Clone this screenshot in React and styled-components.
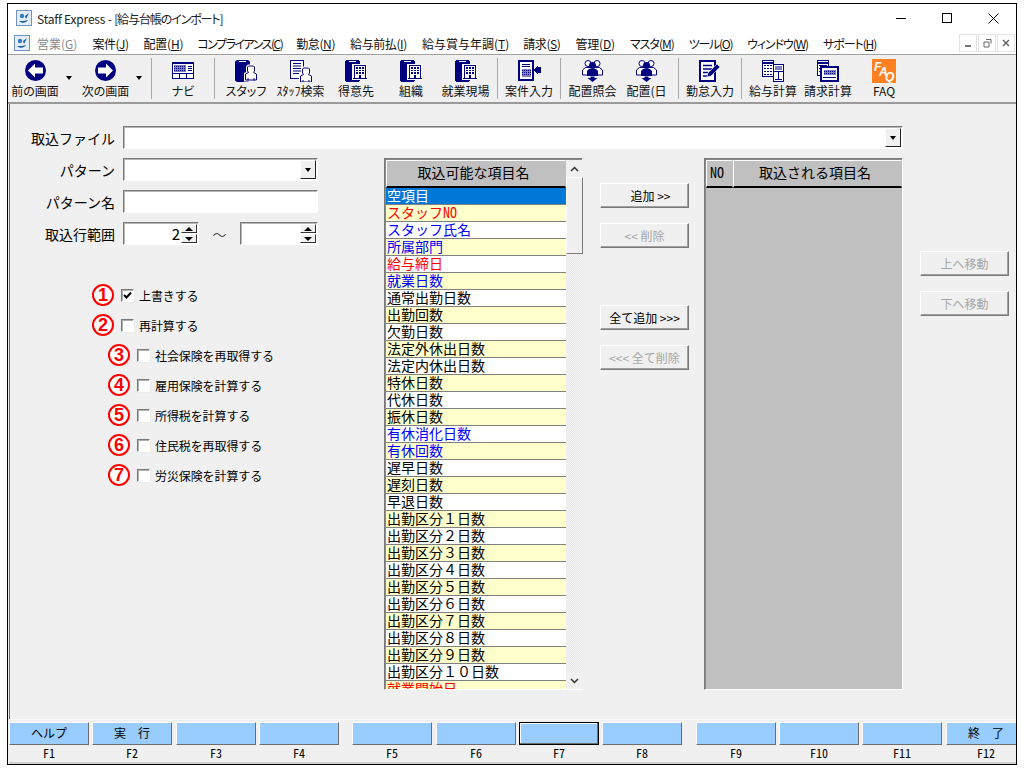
import React from 'react';
import styled, { createGlobalStyle } from 'styled-components';

const Global = createGlobalStyle`
  html, body { margin: 0; padding: 0; background: #fff; }
  body { width: 1024px; height: 768px; overflow: hidden; }
  * { box-sizing: border-box; }
`;

const gothic = `"Noto Sans CJK JP", "Liberation Sans", sans-serif`;
const navy = '#000080';
const dither = '#7f7fbf';

const Page = styled.div`
  width: 1024px;
  height: 768px;
  padding: 3px 7px 3px 7px;
  font-family: ${gothic};
  color: #000;
`;

const Window = styled.div`
  height: 762px;
  border: 1px solid #000;
  display: flex;
  flex-direction: column;
  background: #f0f0f0;
  overflow: hidden;
`;

const TitleBar = styled.div`
  height: 28px;
  background: #fff;
  display: flex;
  align-items: center;
  padding-left: 8px;
`;

const TitleText = styled.div`
  margin-left: 5px;
  font-size: 12px;
  letter-spacing: -0.2px;
  font-feature-settings: "palt";
  color: #222;
  flex: 1;
`;

const TitleDoc = styled.span`
  letter-spacing: -1.1px;
`;

const WinButton = styled.div`
  width: 46px;
  height: 28px;
  display: flex;
  align-items: center;
  justify-content: center;
`;

const MenuBar = styled.div`
  height: 23px;
  background: #fff;
  display: flex;
  align-items: center;
  padding-left: 6px;
  border-bottom: 1px solid #a0a0a0;
`;

const MenuItem = styled.span`
  font-size: 12px;
  font-feature-settings: "palt";
  color: ${p => (p.$off ? '#8a8a8a' : '#111')};
  margin-left: ${p => p.$gap}px;
  letter-spacing: ${p => p.$ls || 0}px;
  white-space: nowrap;
  u { text-underline-offset: 1px; }
`;

const MdiButtons = styled.div`
  margin-left: auto;
  display: flex;
  gap: 1px;
  padding-right: 1px;
`;

const MdiButton = styled.div`
  width: 18px;
  height: 18px;
  border: 1px solid #e3e3e3;
  display: flex;
  align-items: center;
  justify-content: center;
`;

const ToolBar = styled.div`
  height: 49px;
  display: flex;
  padding-left: 2px;
  border-bottom: 2px solid #9a9a9a;
  background: #f0f0f0;
`;

const Tool = styled.div`
  width: ${p => p.$w}px;
  margin-right: ${p => p.$mr || 0}px;
  flex: none;
  position: relative;
  display: flex;
  flex-direction: column;
  align-items: center;
  padding-top: 3px;
`;

const ToolIcon = styled.div`
  height: 25px;
  display: flex;
  align-items: center;
  justify-content: center;
`;

const ToolLabel = styled.div`
  font-size: 12px;
  line-height: 14px;
  margin-top: 1px;
  font-feature-settings: ${p => (p.$narrow ? '"palt"' : 'normal')};
  white-space: nowrap;
  color: #111;
`;

const Caret = styled.span`
  position: absolute;
  left: ${p => p.$l}px;
  top: 21px;
  border-left: 3.5px solid transparent;
  border-right: 3.5px solid transparent;
  border-top: 4px solid #000;
`;

const ToolSep = styled.div`
  width: 1px;
  height: 41px;
  margin-top: 3px;
  background: #a8a8a8;
  flex: none;
`;

const Content = styled.div`
  flex: 1;
  min-height: 0;
  margin-left: 1px;
  border-left: 1px solid #6e6e6e;
  padding: 22px 0 0 0;
  display: flex;
  flex-direction: column;
`;

const FileRow = styled.div`
  display: flex;
  align-items: center;
  height: 23px;
  padding-left: 21px;
`;

const FieldLabel = styled.div`
  width: 92px;
  text-align: right;
  font-size: 14px;
  padding-right: 8px;
  white-space: nowrap;
  flex: none;
`;

const Sunken = styled.div`
  width: ${p => p.$w}px;
  height: 23px;
  background: #fff;
  border: 1px solid;
  border-color: #7a7a7a #fff #fff #7a7a7a;
  box-shadow: inset 1px 1px 0 #b8b8b8;
  display: flex;
  align-items: center;
  justify-content: flex-end;
  flex: none;
  font-size: 14px;
`;

const DropButton = styled.div`
  width: 16px;
  height: 19px;
  margin-right: 1px;
  background: #f0f0f0;
  border: 1px solid;
  border-color: #fff #222 #222 #fff;
  display: flex;
  align-items: center;
  justify-content: center;
  &::after {
    content: '';
    border-left: 3px solid transparent;
    border-right: 3px solid transparent;
    border-top: 4px solid #000;
  }
`;

const SpinValue = styled.span`
  padding-right: 1px;
  font-size: 15px;
`;

const Spin = styled.div`
  width: 16px;
  height: 19px;
  margin-right: 1px;
  display: flex;
  flex-direction: column;
  gap: 1px;
`;

const SpinPart = styled.div`
  flex: 1;
  background: #f0f0f0;
  border: 1px solid;
  border-color: #fff #333 #333 #fff;
  display: flex;
  align-items: center;
  justify-content: center;
  &::after {
    content: '';
    border-left: 4px solid transparent;
    border-right: 4px solid transparent;
    ${p => (p.$up ? 'border-bottom: 4px solid #000;' : 'border-top: 4px solid #000;')}
  }
`;

const Columns = styled.div`
  margin-top: 9px;
  display: flex;
  padding-left: 21px;
`;

const LeftPane = styled.div`
  width: 353px;
  flex: none;
`;

const FieldRow = styled.div`
  display: flex;
  align-items: center;
  height: 23px;
  margin-bottom: ${p => p.$mb ?? 9}px;
`;

const Tilde = styled.span`
  width: 41px;
  text-align: center;
  font-size: 14px;
  font-weight: 300;
  flex: none;
`;

const Checks = styled.div`
  margin-top: 38px;
  display: flex;
  flex-direction: column;
  gap: 6px;
`;

const CheckRow = styled.div`
  height: 24px;
  display: flex;
  align-items: center;
  padding-left: ${p => (p.$sub ? 77 : 61)}px;
  font-size: 12px;
  letter-spacing: -0.1px;
`;

const Badge = styled.div`
  width: 22px;
  height: 22px;
  border-radius: 50%;
  border: 2px solid #ff0000;
  background: #fff;
  color: #ff0000;
  font: bold 18px/18px "Liberation Sans", sans-serif;
  letter-spacing: 0;
  text-align: center;
  flex: none;
`;

const Box = styled.div`
  width: 13px;
  height: 13px;
  margin-left: 7px;
  margin-right: 5px;
  background: #fff;
  border: 1px solid;
  border-color: #7a7a7a #fff #fff #7a7a7a;
  box-shadow: inset 1px 1px 0 #b0b0b0, 0 0 0 0.5px #e8e8e8;
  display: flex;
  align-items: center;
  justify-content: center;
  flex: none;
`;

const ListPanel = styled.div`
  width: 199px;
  height: 532px;
  flex: none;
  border: 1px solid;
  border-color: #7a7a7a #fff #fff #7a7a7a;
  box-shadow: inset 1px 1px 0 #8a8a8a;
  padding: 1px 0 0 1px;
  display: flex;
`;

const ListBody = styled.div`
  width: 180px;
  overflow: hidden;
  flex: none;
`;

const HeaderCell = styled.div`
  height: 28px;
  background: #c0c0c0;
  border: 1px solid;
  border-color: #fff #c0c0c0 #000 #fff;
  display: flex;
  align-items: center;
  justify-content: center;
  padding: 0 5px 3px 0;
  font-size: 14px;
  font-feature-settings: ${p => (p.$half ? '"hwid"' : 'normal')};
  width: ${p => (p.$w ? `${p.$w}px` : 'auto')};
  flex: ${p => (p.$w ? 'none' : 1)};
  border-bottom-width: 2px;
`;

const Row = styled.div`
  height: 17px;
  line-height: 15px;
  font-size: 14px;
  padding-left: 1px;
  white-space: nowrap;
  overflow: hidden;
  border-bottom: 1px solid #808080;
  font-feature-settings: ${p => (p.$half ? '"hwid"' : 'normal')};
  background: ${p => p.$bg};
  color: ${p => p.$fg};
`;

const Scroll = styled.div`
  width: 17px;
  flex: none;
  display: flex;
  flex-direction: column;
  background: #f0f0f0 repeating-conic-gradient(#e6e6e6 0 25%, #f7f7f7 0 50%) 0 0 / 2px 2px;
`;

const ScrollEnd = styled.div`
  height: 17px;
  background: #f0f0f0;
  display: flex;
  align-items: center;
  justify-content: center;
  flex: none;
`;

const ScrollThumb = styled.div`
  height: 77px;
  background: #f0f0f0;
  border: 1px solid;
  border-color: #fff #7a7a7a #7a7a7a #fff;
  flex: none;
`;

const ScrollTrack = styled.div`
  flex: 1;
`;

const MidPane = styled.div`
  width: 121px;
  flex: none;
  padding: 25px 0 0 17px;
`;

const Bevel = styled.div`
  width: 89px;
  height: 25px;
  background: #f0f0f0;
  border: 1px solid;
  border-color: #fff #7a7a7a #7a7a7a #fff;
  box-shadow: inset -1px -1px 0 #a0a0a0;
  font-size: 12px;
  display: flex;
  align-items: center;
  justify-content: center;
  white-space: pre;
  color: ${p => (p.$off ? '#a6a6a6' : '#000')};
  margin-top: ${p => p.$mt || 0}px;
`;

const RightPanel = styled.div`
  width: 199px;
  height: 532px;
  flex: none;
  background: #c0c0c0;
  border: 1px solid;
  border-color: #7a7a7a #fff #fff #7a7a7a;
  box-shadow: inset 1px 1px 0 #8a8a8a;
  padding: 1px 0 0 1px;
`;

const RightHead = styled.div`
  display: flex;
  height: 28px;
`;

const MovePane = styled.div`
  width: 105px;
  flex: none;
  padding: 93px 0 0 17px;
`;

const FnBar = styled.div`
  height: 45px;
  flex: none;
  margin-left: 1px;
  padding: 2px 0 0 0;
  display: flex;
  border-top: 1px solid #fafafa;
  border-bottom: 2px solid #d0d0d0;
  background: #f0f0f0;
`;

const FnCol = styled.div`
  width: 80px;
  margin-left: ${p => p.$ml ?? 3}px;
  flex: none;
  display: flex;
  flex-direction: column;
  align-items: center;
`;

const FnKey = styled.div`
  width: 80px;
  height: 23px;
  background: #99ccff;
  border: 1px solid;
  border-color: ${p => (p.$focus ? '#000' : '#fff #6e6e6e #6e6e6e #fff')};
  box-shadow: ${p => (p.$focus ? 'inset -1px -1px 0 #6e6e6e, inset 1px 1px 0 #fff' : 'none')};
  font-size: 12px;
  line-height: 20px;
  text-align: center;
  white-space: pre;
`;

const FnName = styled.div`
  font-size: 12px;
  line-height: 14px;
  font-feature-settings: "hwid";
  margin-top: 1px;
`;

const AppIcon = () => (
  <svg width="16" height="16" viewBox="0 0 16 16">
    <rect x=".5" y=".5" width="15" height="15" fill="#e4eef8" stroke="#6f93bd" />
    <path d="M3 11c3 3 7 2 9-1-2 1-6 1-9 1z" fill="#1c5fa8" />
    <circle cx="6" cy="6" r="2.2" fill="#2f7fc8" />
    <path d="M10 9l3-6-4 3z" fill="#1c5fa8" />
  </svg>
);

const Back = ({ flip }) => (
  <svg width="21" height="21" viewBox="0 0 21 21" style={flip ? { transform: 'scaleX(-1)' } : undefined}>
    <circle cx="10.5" cy="10.5" r="10.5" fill={navy} />
    <path d="M3 10.500L10 3.500v4h8v6h-8v4z" fill="#fff" />
  </svg>
);

const Navi = () => (
  <svg width="22" height="17" viewBox="0 0 22 17" shapeRendering="crispEdges">
    <rect x=".5" y=".5" width="21" height="16" fill="#fff" stroke={navy} />
    <path d="M0 1.500h22" stroke={navy} />
    <rect x="2" y="3" width="12" height="7" fill={dither} />
    <path d="M2 4.500h12M2 6.500h12M2 8.500h12" stroke={navy} strokeDasharray="1 1" />
    <path d="M16 4.500h4M16 6.500h4M16 8.500h4" stroke={navy} />
    <path d="M0 11.500h22M7.500 11v6M14.500 11v6" stroke={navy} fill="none" />
  </svg>
);

const Cylinder = () => (
  <>
    <path d="M2 0h11l2 1.500V20.500l-2 1.500H2l-2-1.500V1.500z" fill={navy} />
    <path d="M4 1.500h7" stroke="#fff" />
  </>
);

const Person = ({ x = 0, y = 0 }) => (
  <g transform={`translate(${x} ${y})`}>
    <path d="M3.500 1h5l1 1v4l-1 1.500 3 1.500v6H.500v-6l3-1.500-1-1.500V2z" fill="#fff" stroke="#fff" strokeWidth="3" />
    <path d="M3.500 1h5l1 1v4l-1 1.500 3 1.500v6H.500v-6l3-1.500-1-1.500V2z" fill="#fff" stroke={navy} />
    <path d="M3 13v2.500M9 13v2.500" stroke={navy} />
  </g>
);

const CylPerson = () => (
  <svg width="22" height="22" viewBox="0 0 22 22">
    <Cylinder />
    <Person x={10} y={5} />
  </svg>
);

const CylBuilding = () => (
  <svg width="22" height="22" viewBox="0 0 22 22" shapeRendering="crispEdges">
    <Cylinder />
    <rect x="7" y="4" width="15" height="16" fill="#fff" />
    <rect x="9.500" y="5.500" width="11" height="13" fill="#fff" stroke={navy} />
    <path d="M11 8h8M11 10.500h8M11 13h8" stroke={navy} strokeDasharray="2 1" strokeWidth="1.500" />
    <path d="M14 15h2v4h-2z" fill={navy} />
    <path d="M8 18.500h14" stroke={navy} strokeWidth="1.500" />
  </svg>
);

const DocPerson = () => (
  <svg width="22" height="22" viewBox="0 0 22 22">
    <rect x=".5" y=".5" width="13" height="18" fill="#fff" stroke={navy} />
    <path d="M3 3.500h8M3 6h8M3 8.500h8M3 11h8M3 13.500h6" stroke={navy} />
    <Person x={10} y={7} />
  </svg>
);

const DocArrow = () => (
  <svg width="23" height="21" viewBox="0 0 23 21" shapeRendering="crispEdges">
    <rect x="1" y="1" width="14" height="19" fill="#fff" stroke={navy} strokeWidth="2" />
    <path d="M4 4.500h8M4 6.500h8" stroke={navy} />
    <rect x="4" y="9" width="9" height="8" fill={dither} />
    <path d="M4 10.500h9M4 12.500h9M4 14.500h9" stroke={navy} strokeDasharray="1 1" />
    <path d="M15 10l5-5v2h3v6h-3v2z" fill={navy} />
  </svg>
);

const People = () => (
  <svg width="21" height="22" viewBox="0 0 21 22">
    <circle cx="6" cy="3.500" r="3" fill="#fff" stroke={navy} />
    <circle cx="15" cy="3.500" r="3" fill="#fff" stroke={navy} />
    <path d="M.5 15V10l3-2.500h14l3 2.500v5z" fill="#fff" stroke={navy} />
    <circle cx="10.500" cy="5.500" r="3.500" fill={navy} />
    <path d="M5 16V11l2-2h7l2 2v5z" fill={navy} />
    <path d="M8.500 16.500h4v1.500h3L10.500 22l-5-4h3z" fill={navy} />
  </svg>
);

const Edit = () => (
  <svg width="22" height="22" viewBox="0 0 22 22">
    <rect x="1" y="1" width="15" height="20" fill="#fff" stroke={navy} strokeWidth="2" />
    <path d="M4 5.500h9M4 9h9M4 12.500h5M4 16h4" stroke={navy} strokeWidth="1.500" />
    <path d="M8 17l1-4L18 4l3 3-9 9z" fill={navy} stroke="#f0f0f0" strokeWidth=".6" />
  </svg>
);

const Calc = () => (
  <svg width="22" height="22" viewBox="0 0 22 22" shapeRendering="crispEdges">
    <rect x=".5" y=".5" width="11" height="16" fill="#fff" stroke={navy} />
    <path d="M1 2.500h10" stroke={navy} strokeWidth="2" />
    <path d="M2 5.500h8M2 8.500h8M2 11.500h8M2 14.500h8" stroke={navy} strokeDasharray="2 1" strokeWidth="1.500" />
    <rect x="11.500" y="4.500" width="10" height="17" fill="#fff" stroke={navy} />
    <rect x="13" y="6" width="7" height="4" fill={dither} />
    <path d="M11 11.500h11M16.500 12v7M13 19.500h7" stroke={navy} />
  </svg>
);

const Bill = () => (
  <svg width="22" height="22" viewBox="0 0 22 22" shapeRendering="crispEdges">
    <rect x=".5" y=".5" width="11" height="15" fill="#fff" stroke={navy} />
    <path d="M1 2.500h10" stroke={navy} strokeWidth="2" />
    <path d="M2 5.500h8M2 8.500h2M2 11.500h2" stroke={navy} />
    <rect x="4" y="7" width="17" height="14" fill="#fff" stroke={navy} strokeWidth="2" />
    <rect x="6.500" y="10" width="12" height="5" fill={dither} />
    <path d="M7 11.500h11M7 13.500h11" stroke={navy} strokeDasharray="1 1" />
    <path d="M6 17.500h13" stroke={navy} />
  </svg>
);

const FaqText = styled.text`
  fill: #fff;
  font: italic bold 12px "Liberation Sans", sans-serif;
`;

const Faq = () => (
  <svg width="24" height="24" viewBox="0 0 24 24">
    <rect width="24" height="24" fill="#ff8020" />
    <FaqText x="2" y="12">F</FaqText>
    <FaqText x="7" y="17">A</FaqText>
    <FaqText x="13" y="22">Q</FaqText>
  </svg>
);

const tools = [
  { label: '前の画面', w: 50, icon: <Back />, caret: 56, narrow: true },
  { label: '次の画面', w: 91, icon: <Back flip />, caret: 76, narrow: true },
  'sep',
  { label: 'ナビ', w: 62, icon: <Navi />, narrow: true },
  'sep',
  { label: 'スタッフ', w: 62, icon: <CylPerson />, narrow: true },
  { label: 'ｽﾀｯﾌ検索', w: 47, icon: <DocPerson />, narrow: true },
  { label: '得意先', w: 64, icon: <CylBuilding /> },
  { label: '組織', w: 46, icon: <CylBuilding /> },
  { label: '就業現場', w: 63, icon: <CylBuilding /> },
  'sep',
  { label: '案件入力', w: 62, icon: <DocArrow /> },
  'sep',
  { label: '配置照会', w: 63, icon: <People /> },
  { label: '配置(日', w: 45, mr: 9, icon: <People /> },
  'sep',
  { label: '勤怠入力', w: 62, icon: <Edit /> },
  'sep',
  { label: '給与計算', w: 62, icon: <Calc /> },
  { label: '請求計算', w: 48, icon: <Bill /> },
  { label: 'FAQ', w: 64, icon: <Faq /> },
];

const menus = [
  ['営業', 'G', 7, 0, true], ['案件', 'J', 15, -0.5], ['配置', 'H', 15, -0.2], ['コンプライアンス', 'C', 14, -1.5],
  ['勤怠', 'N', 14, -0.4], ['給与前払', 'I', 15, -0.4], ['給与賞与年調', 'T', 15, 0], ['請求', 'S', 14, -0.4],
  ['管理', 'D', 15, -0.2], ['マスタ', 'M', 15, -1], ['ツール', 'O', 15, -1.3], ['ウィンドウ', 'W', 15, -1.1], ['サポート', 'H', 15, -1.1],
];

const R = '#ff0000';
const B = '#0000ff';
const K = '#000';
const items = [
  ['空項目', '#fff'], ['スタッフNO', R], ['スタッフ氏名', B], ['所属部門', B], ['給与締日', R], ['就業日数', B],
  ['通常出勤日数', K], ['出勤回数', K], ['欠勤日数', K], ['法定外休出日数', K], ['法定内休出日数', K],
  ['特休日数', K], ['代休日数', K], ['振休日数', K], ['有休消化日数', B], ['有休回数', B], ['遅早日数', K],
  ['遅刻日数', K], ['早退日数', K], ['出勤区分１日数', K], ['出勤区分２日数', K], ['出勤区分３日数', K],
  ['出勤区分４日数', K], ['出勤区分５日数', K], ['出勤区分６日数', K], ['出勤区分７日数', K],
  ['出勤区分８日数', K], ['出勤区分９日数', K], ['出勤区分１０日数', K], ['就業開始日', R],
];

const checks = [
  ['上書きする', false, true], ['再計算する', false, false], ['社会保険を再取得する', true, false],
  ['雇用保険を計算する', true, false], ['所得税を計算する', true, false], ['住民税を再取得する', true, false],
  ['労災保険を計算する', true, false],
];

const fnKeys = [
  { n: 'F1', t: 'ヘルプ', ml: 0 }, { n: 'F2', t: '実　行' }, { n: 'F3', ml: 4 }, { n: 'F4' },
  { n: 'F5', ml: 13 }, { n: 'F6', ml: 4 }, { n: 'F7', focus: true }, { n: 'F8' },
  { n: 'F9', ml: 14 }, { n: 'F10' }, { n: 'F11' }, { n: 'F12', t: '終　了', ml: 4 },
];

function rowBg(i) {
  if (i === 0) return '#0078d7';
  return i % 2 ? '#ffffcc' : '#fff';
}

export default function App() {
  return (
    <Page>
      <Global />
      <Window>
        <TitleBar>
          <AppIcon />
          <TitleText>Staff Express - <TitleDoc>[給与台帳のインポート]</TitleDoc></TitleText>
          <WinButton>
            <svg width="11" height="11"><path d="M0 5.500h10" stroke="#000" /></svg>
          </WinButton>
          <WinButton>
            <svg width="11" height="11"><rect x=".5" y=".5" width="9" height="9" fill="none" stroke="#000" /></svg>
          </WinButton>
          <WinButton>
            <svg width="11" height="11"><path d="M.5 .5l10 10M10.500 .5l-10 10" stroke="#000" /></svg>
          </WinButton>
        </TitleBar>
        <MenuBar>
          <AppIcon />
          {menus.map(([name, key, gap, ls, off], i) => (
            <MenuItem key={i} $gap={gap} $ls={ls} $off={off}>
              {name}(<u>{key}</u>)
            </MenuItem>
          ))}
          <MdiButtons>
            <MdiButton>
              <svg width="8" height="8"><path d="M1 7h6" stroke="#777" strokeWidth="2" /></svg>
            </MdiButton>
            <MdiButton>
              <svg width="9" height="9"><path d="M3 .5h5v4M1 3h5v5h-5z" stroke="#666" fill="none" /></svg>
            </MdiButton>
            <MdiButton>
              <svg width="8" height="8"><path d="M1 1l6 6M7 1l-6 6" stroke="#666" strokeWidth="1.500" /></svg>
            </MdiButton>
          </MdiButtons>
        </MenuBar>
        <ToolBar>
          {tools.map((t, i) =>
            t === 'sep' ? (
              <ToolSep key={i} />
            ) : (
              <Tool key={i} $w={t.w} $mr={t.mr}>
                <ToolIcon>{t.icon}</ToolIcon>
                <ToolLabel $narrow={t.narrow}>{t.label}</ToolLabel>
                {t.caret !== undefined && <Caret $l={t.caret} />}
              </Tool>
            )
          )}
        </ToolBar>
        <Content>
          <FileRow>
            <FieldLabel>取込ファイル</FieldLabel>
            <Sunken $w={780}><DropButton /></Sunken>
          </FileRow>
          <Columns>
            <LeftPane>
              <FieldRow>
                <FieldLabel>パターン</FieldLabel>
                <Sunken $w={195}><DropButton /></Sunken>
              </FieldRow>
              <FieldRow>
                <FieldLabel>パターン名</FieldLabel>
                <Sunken $w={195} />
              </FieldRow>
              <FieldRow $mb={0}>
                <FieldLabel>取込行範囲</FieldLabel>
                <Sunken $w={76}>
                  <SpinValue>2</SpinValue>
                  <Spin><SpinPart $up /><SpinPart /></Spin>
                </Sunken>
                <Tilde>～</Tilde>
                <Sunken $w={78}>
                  <Spin><SpinPart $up /><SpinPart /></Spin>
                </Sunken>
              </FieldRow>
              <Checks>
                {checks.map(([label, sub, on], i) => (
                  <CheckRow key={i} $sub={sub}>
                    <Badge>{i + 1}</Badge>
                    <Box>
                      {on && (
                        <svg width="9" height="9" viewBox="0 0 9 9">
                          <path d="M1 4l2.500 2.500L8 1.500" stroke="#000" strokeWidth="2" fill="none" />
                        </svg>
                      )}
                    </Box>
                    {label}
                  </CheckRow>
                ))}
              </Checks>
            </LeftPane>
            <ListPanel>
              <ListBody>
                <HeaderCell>取込可能な項目名</HeaderCell>
                {items.map(([name, fg], i) => (
                  <Row key={i} $bg={rowBg(i)} $fg={fg} $half={name.includes('NO')}>{name}</Row>
                ))}
              </ListBody>
              <Scroll>
                <ScrollEnd>
                  <svg width="9" height="6"><path d="M1 5l3.500-3.500L8 5" stroke="#333" strokeWidth="1.500" fill="none" /></svg>
                </ScrollEnd>
                <ScrollThumb />
                <ScrollTrack />
                <ScrollEnd>
                  <svg width="9" height="6"><path d="M1 1l3.500 3.500L8 1" stroke="#333" strokeWidth="1.500" fill="none" /></svg>
                </ScrollEnd>
              </Scroll>
            </ListPanel>
            <MidPane>
              <Bevel>　追加 &gt;&gt;</Bevel>
              <Bevel $off $mt={15}>&lt;&lt; 削除</Bevel>
              <Bevel $mt={57}>全て追加 &gt;&gt;&gt;</Bevel>
              <Bevel $off $mt={15}>&lt;&lt;&lt; 全て削除</Bevel>
            </MidPane>
            <RightPanel>
              <RightHead>
                <HeaderCell $w={27} $half>NO</HeaderCell>
                <HeaderCell>取込される項目名</HeaderCell>
              </RightHead>
            </RightPanel>
            <MovePane>
              <Bevel $off>上へ移動</Bevel>
              <Bevel $off $mt={15}>下へ移動</Bevel>
            </MovePane>
          </Columns>
        </Content>
        <FnBar>
          {fnKeys.map(k => (
            <FnCol key={k.n} $ml={k.ml}>
              <FnKey $focus={k.focus}>{k.t}</FnKey>
              <FnName>{k.n}</FnName>
            </FnCol>
          ))}
        </FnBar>
      </Window>
    </Page>
  );
}
